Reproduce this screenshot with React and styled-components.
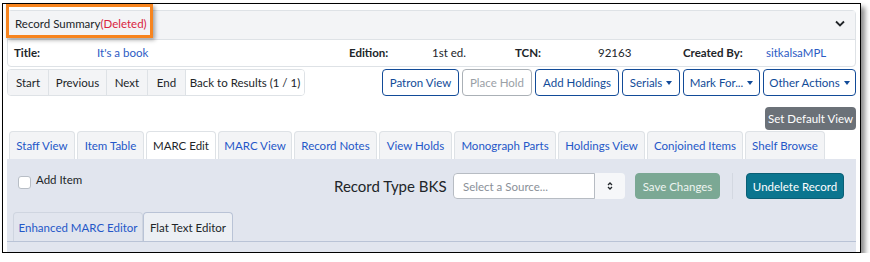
import React from "react";
import styled, { createGlobalStyle } from "styled-components";

const Global = createGlobalStyle`
  body {
    margin: 0;
    background: #fff;
    font-family: Lato, "Noto Sans", sans-serif;
    font-size: 11.5px;
    color: #212529;
  }
`;

const Frame = styled.div`
  position: relative;
  margin: 3px 0 0 2px;
  width: 859px;
  height: 250px;
  border: 1px solid #000;
  box-shadow: 4px 4px 5px rgba(0, 0, 0, 0.45);
  padding: 6px 4px 0 4px;
  box-sizing: border-box;
  overflow: hidden;
  background: #fff;
`;

const Highlight = styled.div`
  position: absolute;
  left: 3px;
  top: 0;
  width: 147px;
  height: 34px;
  border: 3px solid #f7841e;
  box-sizing: border-box;
  box-shadow: 2px 2px 4px rgba(0, 0, 0, 0.35);
  pointer-events: none;
`;

const Card = styled.div`
  border: 1px solid #dee2e6;
  border-radius: 4px;
`;

const CardHeader = styled.div`
  height: 29px;
  box-sizing: border-box;
  padding: 0 10px 3px 7px;
  background: #f3f4f6;
  border-bottom: 1px solid #dee2e6;
  display: flex;
  align-items: center;
  justify-content: space-between;
`;

const Deleted = styled.span`
  color: #d9233f;
`;

const InfoRow = styled.div`
  height: 26px;
  box-sizing: border-box;
  padding: 0 0 2px 6px;
  display: grid;
  grid-template-columns: 83px 252px 83px 83px 83px 85px 83px 1fr;
  align-items: center;
`;

const Label = styled.span`
  font-weight: 700;
`;

const Link = styled.span`
  color: #2c5bc4;
`;

const Toolbar = styled.div`
  display: flex;
  align-items: center;
  margin-top: 1px;
  height: 28px;
`;

const Group = styled.div`
  display: flex;
  border: 1px solid #dee2e6;
  border-radius: 4px;
  overflow: hidden;
  height: 27px;
  box-sizing: border-box;
`;

const GroupBtn = styled.div`
  display: flex;
  align-items: center;
  justify-content: center;
  width: ${(p) => p.$w}px;
  background: ${(p) => (p.$white ? "#fff" : "#f3f4f6")};
  border-left: ${(p) => (p.$first ? "none" : "1px solid #dee2e6")};
  white-space: nowrap;
`;

const Actions = styled.div`
  margin-left: auto;
  display: flex;
  gap: 3px;
`;

const OutlineBtn = styled.div`
  display: flex;
  align-items: center;
  justify-content: center;
  gap: 4px;
  height: 27px;
  width: ${(p) => p.$w}px;
  box-sizing: border-box;
  border: 1px solid ${(p) => (p.$disabled ? "#aab0b6" : "#124b98")};
  border-radius: 4px;
  color: ${(p) => (p.$disabled ? "#9aa0a6" : "#124b98")};
  white-space: nowrap;
`;

const Caret = styled.span`
  width: 0;
  height: 0;
  border-left: 3px solid transparent;
  border-right: 3px solid transparent;
  border-top: 4px solid currentColor;
  margin-top: 1px;
`;

const DefaultRow = styled.div`
  display: flex;
  justify-content: flex-end;
  margin-top: 11px;
`;

const GreyBtn = styled.div`
  background: #6b7178;
  color: #fff;
  border-radius: 4px;
  height: 23px;
  width: 91px;
  display: flex;
  align-items: center;
  justify-content: center;
  white-space: nowrap;
`;

const Tabs = styled.div`
  display: flex;
  gap: 2px;
  padding-left: 2px;
  height: 29px;
  align-items: flex-end;
`;

const Tab = styled.div`
  height: 28px;
  box-sizing: border-box;
  display: flex;
  align-items: center;
  justify-content: center;
  width: ${(p) => p.$w}px;
  border: 1px solid #dee2e6;
  border-bottom: none;
  border-radius: 4px 4px 0 0;
  background: ${(p) => (p.$active ? "#fff" : "#f3f4f6")};
  color: ${(p) => (p.$active ? "#212529" : "#2457c8")};
  white-space: nowrap;
`;

const Panel = styled.div`
  background: #e1e5ee;
  height: 96px;
  display: flex;
  flex-direction: column;
`;

const EditRow = styled.div`
  display: flex;
  align-items: flex-start;
  height: 53px;
  padding-left: 11px;
  padding-top: 14px;
  box-sizing: border-box;
`;

const CheckLabel = styled.label`
  display: flex;
  align-items: flex-start;
  gap: 5px;
  width: 60px;
  white-space: nowrap;
`;

const Box = styled.span`
  flex-shrink: 0;
  width: 11px;
  height: 11px;
  background: #fff;
  border: 1px solid #b8bec6;
  border-radius: 3px;
  margin-top: 3px;
`;

const RecordType = styled.div`
  margin-left: 256px;
  width: 119px;
  font-size: 15px;
  margin-top: 4px;
  white-space: nowrap;
`;

const Select = styled.div`
  display: flex;
  height: 26px;
  width: 172px;
  border-radius: 4px;
  overflow: hidden;
`;

const SelectInput = styled.div`
  flex: 1;
  background: #fff;
  border: 1px solid #b7bcc3;
  border-radius: 4px 0 0 4px;
  display: flex;
  align-items: center;
  padding-left: 9px;
  color: #8a9098;
`;

const SelectArrow = styled.div`
  width: 30px;
  background: #f6f7f9;
  display: flex;
  align-items: center;
  justify-content: center;
`;

const Solid = styled.div`
  margin-left: ${(p) => p.$ml}px;
  height: 26px;
  width: ${(p) => p.$w}px;
  box-sizing: border-box;
  border-radius: 4px;
  border: 1px solid ${(p) => p.$border};
  background: ${(p) => p.$bg};
  color: ${(p) => p.$color};
  display: flex;
  align-items: center;
  justify-content: center;
  white-space: nowrap;
`;

const Divider = styled.div`
  width: 1px;
  height: 26px;
  background: #d3d8e1;
  margin-left: 12px;
`;

const SubTabs = styled.div`
  display: flex;
  padding-left: 6px;
  border-bottom: 1px solid #b9c3d6;
  height: 29px;
  align-items: flex-end;
`;

const SubTab = styled.div`
  height: 29px;
  box-sizing: border-box;
  width: ${(p) => p.$w}px;
  display: flex;
  align-items: center;
  justify-content: center;
  border: 1px solid ${(p) => (p.$active ? "#b9c3d6" : "#cfd5e0")};
  border-bottom: none;
  border-radius: 4px 4px 0 0;
  background: ${(p) => (p.$active ? "#eceff4" : "#e1e5ee")};
  color: ${(p) => (p.$active ? "#212529" : "#2457c8")};
  white-space: nowrap;
`;

const tabs = [
  ["Staff View", 66],
  ["Item Table", 67],
  ["MARC Edit", 70, true],
  ["MARC View", 74],
  ["Record Notes", 83],
  ["View Holds", 73],
  ["Monograph Parts", 102],
  ["Holdings View", 87],
  ["Conjoined Items", 96],
  ["Shelf Browse", 80],
];

const nav = [
  ["Start", 40],
  ["Previous", 57],
  ["Next", 40],
  ["End", 37],
  ["Back to Results (1 / 1)", 118, true],
];

export default function App() {
  return (
    <>
      <Global />
      <Frame>
        <Card>
          <CardHeader>
            <span>
              Record Summary<Deleted>(Deleted)</Deleted>
            </span>
            <svg width="10" height="7" viewBox="0 0 10 7">
              <path d="M1 1.5 L5 5.5 L9 1.5" fill="none" stroke="#212529" strokeWidth="1.8" />
            </svg>
          </CardHeader>
          <InfoRow>
            <Label>Title:</Label>
            <Link>It's a book</Link>
            <Label>Edition:</Label>
            <span>1st ed.</span>
            <Label>TCN:</Label>
            <span>92163</span>
            <Label>Created By:</Label>
            <Link>sitkalsaMPL</Link>
          </InfoRow>
        </Card>
        <Toolbar>
          <Group>
            {nav.map(([t, w, white], i) => (
              <GroupBtn key={t} $w={w} $white={white} $first={i === 0}>
                {t}
              </GroupBtn>
            ))}
          </Group>
          <Actions>
            <OutlineBtn $w={77}>Patron View</OutlineBtn>
            <OutlineBtn $w={70} $disabled>Place Hold</OutlineBtn>
            <OutlineBtn $w={84}>Add Holdings</OutlineBtn>
            <OutlineBtn $w={58}>Serials<Caret /></OutlineBtn>
            <OutlineBtn $w={77}>Mark For...<Caret /></OutlineBtn>
            <OutlineBtn $w={93}>Other Actions<Caret /></OutlineBtn>
          </Actions>
        </Toolbar>
        <DefaultRow>
          <GreyBtn>Set Default View</GreyBtn>
        </DefaultRow>
        <Tabs>
          {tabs.map(([t, w, a]) => (
            <Tab key={t} $w={w} $active={a}>
              {t}
            </Tab>
          ))}
        </Tabs>
        <Panel>
          <EditRow>
            <CheckLabel>
              <Box />
              Add Item
            </CheckLabel>
            <RecordType>Record Type BKS</RecordType>
            <Select>
              <SelectInput>Select a Source...</SelectInput>
              <SelectArrow>
                <svg width="6" height="10" viewBox="0 0 6 10">
                  <path d="M1 4 L3 2 L5 4 M1 6 L3 8 L5 6" fill="none" stroke="#212529" strokeWidth="1.3" />
                </svg>
              </SelectArrow>
            </Select>
            <Solid $ml={10} $w={85} $bg="#7ba894" $border="#7ba894" $color="#eef5f1">
              Save Changes
            </Solid>
            <Divider />
            <Solid $ml={13} $w={98} $bg="#0b758f" $border="#0a5f75" $color="#fff">
              Undelete Record
            </Solid>
          </EditRow>
          <SubTabs>
            <SubTab $w={130}>Enhanced MARC Editor</SubTab>
            <SubTab $w={90} $active>
              Flat Text Editor
            </SubTab>
          </SubTabs>
        </Panel>
        <Highlight />
      </Frame>
    </>
  );
}
